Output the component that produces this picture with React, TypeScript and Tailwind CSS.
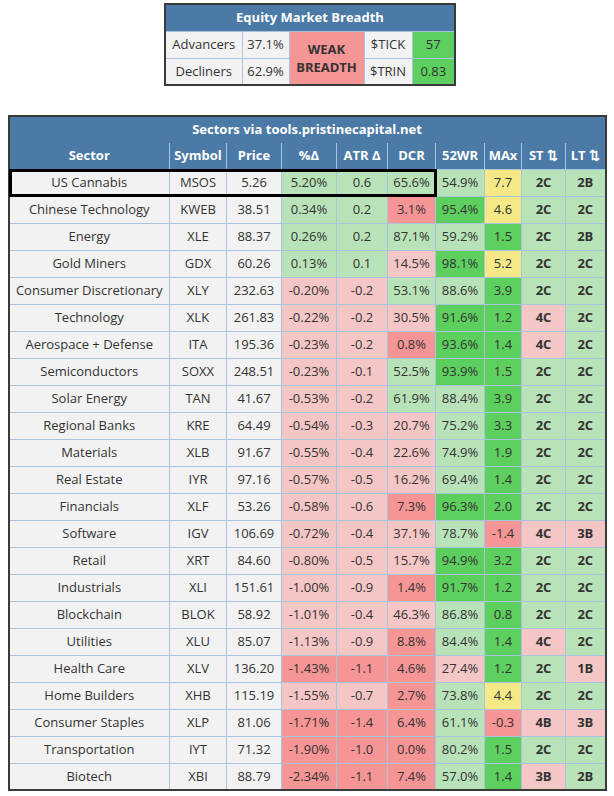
import React from 'react';

type Tone = 'g' | 'G' | 'r' | 'R' | 'y';

const toneBg: Record<Tone, string> = {
  g: 'bg-[#b8e2b8]',
  G: 'bg-[#5ccf5e]',
  r: 'bg-[#f5c6c6]',
  R: 'bg-[#f69595]',
  y: 'bg-[#f5e987]',
};

type Row = [string, string, string, string, Tone, string, Tone, string, Tone, string, Tone, string, Tone, string, Tone, string, Tone];

const rows: Row[] = [
  ['US Cannabis', 'MSOS', '5.26', '5.20%', 'g', '0.6', 'g', '65.6%', 'g', '54.9%', 'g', '7.7', 'y', '2C', 'g', '2B', 'g'],
  ['Chinese Technology', 'KWEB', '38.51', '0.34%', 'g', '0.2', 'g', '3.1%', 'R', '95.4%', 'G', '4.6', 'y', '2C', 'g', '2C', 'g'],
  ['Energy', 'XLE', '88.37', '0.26%', 'g', '0.2', 'g', '87.1%', 'g', '59.2%', 'g', '1.5', 'G', '2C', 'g', '2B', 'g'],
  ['Gold Miners', 'GDX', '60.26', '0.13%', 'g', '0.1', 'g', '14.5%', 'r', '98.1%', 'G', '5.2', 'y', '2C', 'g', '2C', 'g'],
  ['Consumer Discretionary', 'XLY', '232.63', '-0.20%', 'r', '-0.2', 'r', '53.1%', 'g', '88.6%', 'g', '3.9', 'G', '2C', 'g', '2C', 'g'],
  ['Technology', 'XLK', '261.83', '-0.22%', 'r', '-0.2', 'r', '30.5%', 'r', '91.6%', 'G', '1.2', 'G', '4C', 'r', '2C', 'g'],
  ['Aerospace + Defense', 'ITA', '195.36', '-0.23%', 'r', '-0.2', 'r', '0.8%', 'R', '93.6%', 'G', '1.4', 'G', '4C', 'r', '2C', 'g'],
  ['Semiconductors', 'SOXX', '248.51', '-0.23%', 'r', '-0.1', 'r', '52.5%', 'g', '93.9%', 'G', '1.5', 'G', '2C', 'g', '2C', 'g'],
  ['Solar Energy', 'TAN', '41.67', '-0.53%', 'r', '-0.2', 'r', '61.9%', 'g', '88.4%', 'g', '3.9', 'G', '2C', 'g', '2C', 'g'],
  ['Regional Banks', 'KRE', '64.49', '-0.54%', 'r', '-0.3', 'r', '20.7%', 'r', '75.2%', 'g', '3.3', 'G', '2C', 'g', '2C', 'g'],
  ['Materials', 'XLB', '91.67', '-0.55%', 'r', '-0.4', 'r', '22.6%', 'r', '74.9%', 'g', '1.9', 'G', '2C', 'g', '2C', 'g'],
  ['Real Estate', 'IYR', '97.16', '-0.57%', 'r', '-0.5', 'r', '16.2%', 'r', '69.4%', 'g', '1.4', 'G', '2C', 'g', '2C', 'g'],
  ['Financials', 'XLF', '53.26', '-0.58%', 'r', '-0.6', 'r', '7.3%', 'R', '96.3%', 'G', '2.0', 'G', '2C', 'g', '2C', 'g'],
  ['Software', 'IGV', '106.69', '-0.72%', 'r', '-0.4', 'r', '37.1%', 'r', '78.7%', 'g', '-1.4', 'R', '4C', 'r', '3B', 'r'],
  ['Retail', 'XRT', '84.60', '-0.80%', 'r', '-0.5', 'r', '15.7%', 'r', '94.9%', 'G', '3.2', 'G', '2C', 'g', '2C', 'g'],
  ['Industrials', 'XLI', '151.61', '-1.00%', 'r', '-0.9', 'r', '1.4%', 'R', '91.7%', 'G', '1.2', 'G', '2C', 'g', '2C', 'g'],
  ['Blockchain', 'BLOK', '58.92', '-1.01%', 'r', '-0.4', 'r', '46.3%', 'r', '86.8%', 'g', '0.8', 'G', '2C', 'g', '2C', 'g'],
  ['Utilities', 'XLU', '85.07', '-1.13%', 'r', '-0.9', 'r', '8.8%', 'R', '84.4%', 'g', '1.4', 'G', '4C', 'r', '2C', 'g'],
  ['Health Care', 'XLV', '136.20', '-1.43%', 'R', '-1.1', 'R', '4.6%', 'R', '27.4%', 'r', '1.2', 'G', '2C', 'g', '1B', 'r'],
  ['Home Builders', 'XHB', '115.19', '-1.55%', 'r', '-0.7', 'r', '2.7%', 'R', '73.8%', 'g', '4.4', 'y', '2C', 'g', '2C', 'g'],
  ['Consumer Staples', 'XLP', '81.06', '-1.71%', 'R', '-1.4', 'R', '6.4%', 'R', '61.1%', 'g', '-0.3', 'R', '4B', 'r', '3B', 'r'],
  ['Transportation', 'IYT', '71.32', '-1.90%', 'R', '-1.0', 'R', '0.0%', 'R', '80.2%', 'g', '1.5', 'G', '2C', 'g', '2C', 'g'],
  ['Biotech', 'XBI', '88.79', '-2.34%', 'R', '-1.1', 'R', '7.4%', 'R', '57.0%', 'g', '1.4', 'G', '3B', 'r', '2B', 'g'],
];

const cell = 'border border-[#a9c4dc] text-center p-0';
const grey = 'bg-[#f2f2f2]';

function BreadthTable() {
  return (
    <table className="table-fixed border-collapse border-2 border-[#3a3a3a] text-[13px] text-[#333]">
      <colgroup>
        <col className="w-[77px]" />
        <col className="w-[47px]" />
        <col className="w-[75px]" />
        <col className="w-[48px]" />
        <col className="w-[43px]" />
      </colgroup>
      <tbody>
        <tr className="h-[27px] bg-[#4a7aa5]">
          <td colSpan={5} className="text-center font-bold text-white">Equity Market Breadth</td>
        </tr>
        <tr className="h-[27px]">
          <td className={`${cell} ${grey}`}>Advancers</td>
          <td className={`${cell} ${grey}`}>37.1%</td>
          <td rowSpan={2} className={`${cell} bg-[#f69595] font-bold leading-[18px]`}>
            <div>WEAK</div>
            <div>BREADTH</div>
          </td>
          <td className={`${cell} ${grey}`}>$TICK</td>
          <td className={`${cell} bg-[#5ccf5e]`}>57</td>
        </tr>
        <tr className="h-[27px]">
          <td className={`${cell} ${grey}`}>Decliners</td>
          <td className={`${cell} ${grey}`}>62.9%</td>
          <td className={`${cell} ${grey}`}>$TRIN</td>
          <td className={`${cell} bg-[#5ccf5e]`}>0.83</td>
        </tr>
      </tbody>
    </table>
  );
}

function SectorTable() {
  const heads = ['Sector', 'Symbol', 'Price', '%Δ', 'ATR Δ', 'DCR', '52WR', 'MAx', 'ST ⇅', 'LT ⇅'];
  return (
    <div className="relative">
      <table className="table-fixed border-collapse border-2 border-[#3a3a3a] text-[13px] text-[#333]">
        <colgroup>
          <col className="w-[161px]" />
          <col className="w-[57px]" />
          <col className="w-[55px]" />
          <col className="w-[55px]" />
          <col className="w-[51px]" />
          <col className="w-[48px]" />
          <col className="w-[49px]" />
          <col className="w-[37px]" />
          <col className="w-[44px]" />
          <col className="w-[40px]" />
        </colgroup>
        <tbody>
          <tr className="h-[27px] bg-[#4a7aa5]">
            <td colSpan={10} className="text-center font-bold text-white">Sectors via tools.pristinecapital.net</td>
          </tr>
          <tr className="h-[26px] bg-[#4a7aa5]">
            {heads.map((h) => (
              <td key={h} className="border border-[#a9c4dc] border-t-[#4a7aa5] text-center font-bold text-white p-0 whitespace-nowrap">
                {h}
              </td>
            ))}
          </tr>
          {rows.map((r) => (
            <tr key={r[1]} className="h-[27px]">
              <td className={`${cell} ${grey} whitespace-nowrap`}>{r[0]}</td>
              <td className={`${cell} ${grey}`}>{r[1]}</td>
              <td className={`${cell} ${grey}`}>{r[2]}</td>
              <td className={`${cell} ${toneBg[r[4]]}`}>{r[3]}</td>
              <td className={`${cell} ${toneBg[r[6]]}`}>{r[5]}</td>
              <td className={`${cell} ${toneBg[r[8]]}`}>{r[7]}</td>
              <td className={`${cell} ${toneBg[r[10]]}`}>{r[9]}</td>
              <td className={`${cell} ${toneBg[r[12]]}`}>{r[11]}</td>
              <td className={`${cell} ${toneBg[r[14]]} font-bold`}>{r[13]}</td>
              <td className={`${cell} ${toneBg[r[16]]} font-bold`}>{r[15]}</td>
            </tr>
          ))}
        </tbody>
      </table>
      <div className="absolute left-[1px] top-[54px] w-[428px] h-[28px] border-[3px] border-black pointer-events-none" />
    </div>
  );
}

export default function App() {
  return (
    <div className="w-[614px] h-[796px] bg-white flex flex-col items-center pt-[3px] font-['Open_Sans','Liberation_Sans',sans-serif]">
      <div className="ml-[6px]">
        <BreadthTable />
      </div>
      <div className="mt-[29px]">
        <SectorTable />
      </div>
    </div>
  );
}
